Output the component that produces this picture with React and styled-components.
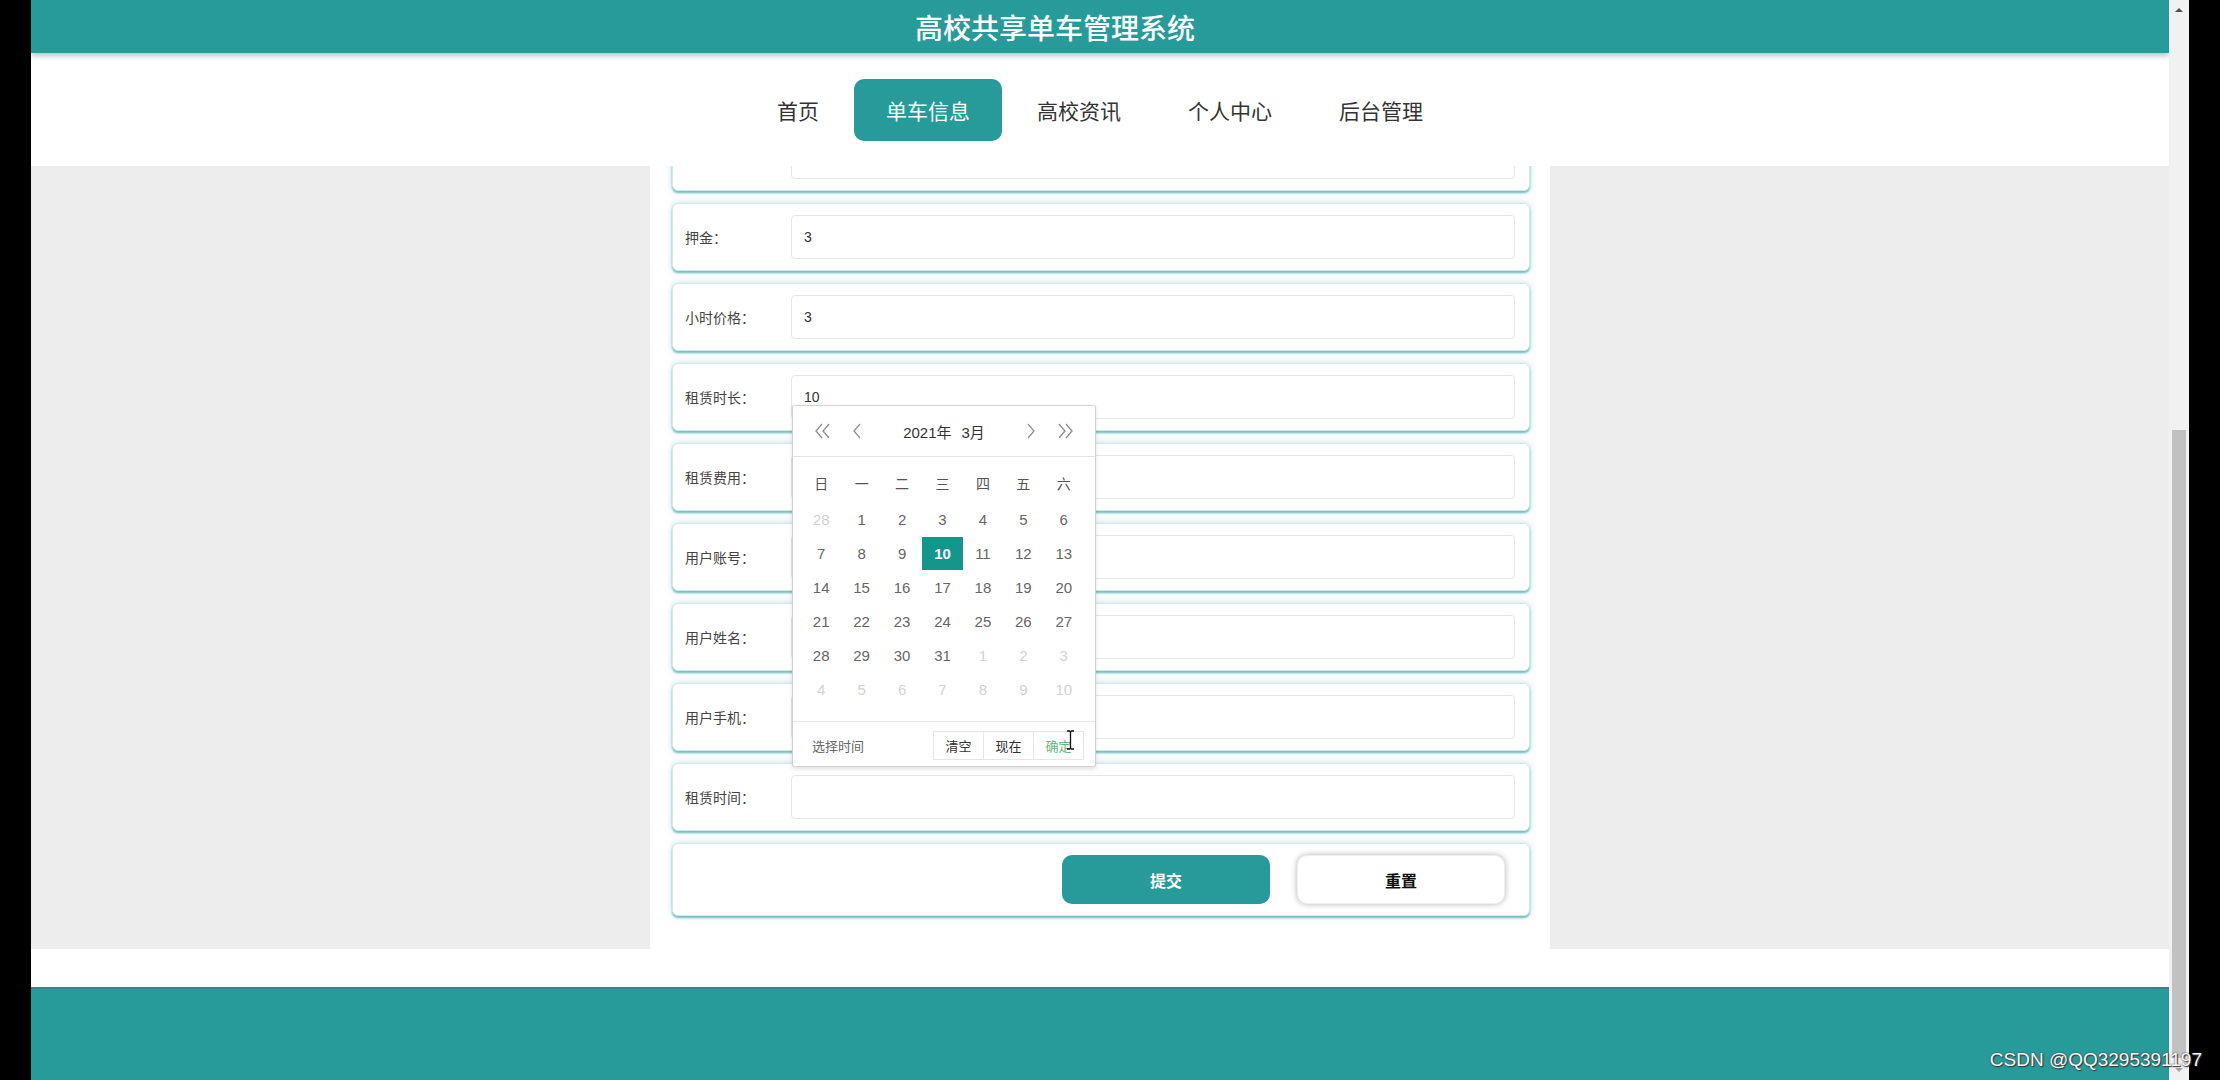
import React from "react";
import styled, { createGlobalStyle } from "styled-components";

const TEAL = "#279b9a";

const GlobalStyle = createGlobalStyle`
  html, body {
    margin: 0;
    padding: 0;
    background: #000;
  }
  body {
    font-family: "Noto Sans CJK SC", "Microsoft YaHei", sans-serif;
    overflow: hidden;
  }
  * {
    box-sizing: border-box;
  }
`;

const Screen = styled.div`
  position: relative;
  display: flex;
  width: 2220px;
  height: 1080px;
  background: #000;
`;

const SideBlack = styled.div`
  width: 31px;
  flex: none;
  background: #000;
`;

const Viewport = styled.div`
  width: 2138px;
  flex: none;
  display: flex;
  flex-direction: column;
  background: #fff;
  overflow: hidden;
`;

const Header = styled.header`
  position: relative;
  z-index: 2;
  height: 53px;
  flex: none;
  display: flex;
  align-items: center;
  justify-content: center;
  padding-right: 90px;
  background: ${TEAL};
  color: #fff;
  font-size: 28px;
  font-weight: 500;
  box-shadow: 0 3px 5px rgba(60, 90, 110, 0.35);
`;

const Nav = styled.nav`
  height: 113px;
  flex: none;
  display: flex;
  align-items: center;
  justify-content: center;
  gap: 3px;
  background: #fff;
`;

const NavItem = styled.a`
  height: 62px;
  padding: 0 32px;
  display: flex;
  align-items: center;
  border-radius: 10px;
  font-size: 21px;
  text-decoration: none;
  color: ${(p) => (p.$active ? "#fff" : "#333")};
  background: ${(p) => (p.$active ? TEAL : "transparent")};
`;

const Main = styled.main`
  height: 783px;
  flex: none;
  display: flex;
  justify-content: center;
  background: #ededed;
  overflow: hidden;
`;

const Panel = styled.div`
  width: 900px;
  background: #fff;
  padding: 0 20px 0 22px;
`;

// page is scrolled: the first row sits partly under the nav
const FormList = styled.div`
  margin-top: -43px;
  display: flex;
  flex-direction: column;
  gap: 12px;
`;

const Card = styled.div`
  height: ${(p) => (p.$tall ? 73 : 68)}px;
  display: flex;
  align-items: center;
  justify-content: ${(p) => (p.$end ? "flex-end" : "flex-start")};
  gap: ${(p) => (p.$end ? "27px" : "0")};
  padding: ${(p) => (p.$end ? "0 24px 0 12px" : "0 14px 0 12px")};
  background: #fff;
  border: 1px solid #d3e8e8;
  border-radius: 6px;
  box-shadow: 0 2px 2px rgba(39, 155, 154, 0.6), 0 0 7px rgba(39, 155, 154, 0.3);
`;

const Label = styled.label`
  width: 106px;
  flex: none;
  font-size: 14px;
  color: #444;
`;

const Field = styled.div`
  position: relative;
  flex: 1;
`;

const InputBox = styled.div`
  height: 44px;
  display: flex;
  align-items: center;
  padding: 0 12px;
  border: 1px solid #e6e6e6;
  border-radius: 4px;
  background: #fff;
  font-family: "Liberation Sans", "Noto Sans CJK SC", sans-serif;
  font-size: 14px;
  color: #333;
`;

const Button = styled.button`
  width: 208px;
  height: 49px;
  border-radius: 10px;
  font-family: "Noto Sans CJK SC", sans-serif;
  font-size: 16px;
  font-weight: 600;
  cursor: pointer;
  border: ${(p) => (p.$primary ? "none" : "1px solid #eee")};
  background: ${(p) => (p.$primary ? TEAL : "#fff")};
  color: ${(p) => (p.$primary ? "#fff" : "#111")};
  box-shadow: ${(p) => (p.$primary ? "none" : "0 0 6px rgba(0, 0, 0, 0.3)")};
`;

const WhiteBand = styled.div`
  height: 38px;
  flex: none;
  background: #fff;
`;

const Footer = styled.footer`
  flex: 1;
  background: ${TEAL};
  border-top: 2px solid #2f8786;
`;

const Scrollbar = styled.div`
  width: 20px;
  flex: none;
  display: flex;
  flex-direction: column;
  background: #f1f1f1;
`;

const ScrollArrow = styled.div`
  height: 20px;
  flex: none;
  display: flex;
  align-items: center;
  justify-content: center;

  &::after {
    content: "";
    border-left: 4px solid transparent;
    border-right: 4px solid transparent;
    ${(p) =>
      p.$down ? "border-top: 4px solid #a3a3a3;" : "border-bottom: 4px solid #505050;"}
  }
`;

const ScrollTrack = styled.div`
  flex: 1;
  display: flex;
  padding: 410px 3px 2px 3px;
`;

const Thumb = styled.div`
  flex: 1;
  background: #c1c1c1;
`;

const Watermark = styled.div`
  position: absolute;
  right: 18px;
  bottom: 9px;
  font-family: "Liberation Sans", sans-serif;
  font-size: 19px;
  color: #f4f4f4;
  text-shadow: 0 0 2px #444, 1px 1px 1px #333;
`;

/* date picker */
const Picker = styled.div`
  position: absolute;
  top: 30px;
  left: 1px;
  z-index: 10;
  width: 304px;
  height: 362px;
  display: flex;
  flex-direction: column;
  background: #fff;
  border: 1px solid #d2d2d2;
  border-radius: 2px;
  box-shadow: 0 2px 4px rgba(0, 0, 0, 0.12);
  font-family: "Liberation Sans", "Noto Sans CJK SC", sans-serif;
`;

const PickerHead = styled.div`
  height: 51px;
  flex: none;
  display: grid;
  grid-template-columns: 34px 34px 1fr 34px 34px;
  align-items: center;
  padding: 0 13px;
  border-bottom: 1px solid #e6e6e6;
`;

const HeadArrow = styled.span`
  display: flex;
  align-items: center;
  justify-content: center;
  cursor: pointer;
`;

const HeadTitle = styled.div`
  display: flex;
  justify-content: center;
  gap: 10px;
  font-size: 15px;
  color: #333;
`;

const DayGrid = styled.div`
  display: grid;
  grid-template-columns: repeat(7, 1fr);
  grid-auto-rows: 33px;
  row-gap: 1px;
  padding: 12px 11px 15px 8px;
`;

const WeekCell = styled.div`
  height: 28px;
  display: flex;
  align-items: center;
  justify-content: center;
  font-size: 14px;
  color: #555;
`;

const DayCell = styled.div`
  display: flex;
  align-items: center;
  justify-content: center;
  font-size: 15px;
  color: ${(p) => (p.$selected ? "#fff" : p.$muted ? "#d2d2d2" : "#666")};
  background: ${(p) => (p.$selected ? "#13978a" : "transparent")};
  font-weight: ${(p) => (p.$selected ? 700 : 400)};
`;

const PickerFoot = styled.div`
  flex: 1;
  display: flex;
  align-items: center;
  justify-content: space-between;
  padding: 2px 11px 0 19px;
  border-top: 1px solid #e6e6e6;
  font-family: "Noto Sans CJK SC", sans-serif;
`;

const FootText = styled.span`
  font-size: 13px;
  color: #666;
`;

const FootBtns = styled.div`
  display: flex;
`;

const FootBtn = styled.span`
  position: relative;
  width: 51px;
  height: 29px;
  display: flex;
  align-items: center;
  justify-content: center;
  border: 1px solid #e6e6e6;
  font-size: 13px;
  color: ${(p) => (p.$confirm ? "#5fb878" : "#333")};
  & + & {
    margin-left: -1px;
  }
`;

const Cursor = styled.svg`
  position: absolute;
  left: 32px;
  top: -2px;
`;

const Chevron = ({ dir = "left", double }) => {
  const flip = dir === "right";
  const w = double ? 18 : 10;
  return (
    <svg
      width={w}
      height="16"
      viewBox={`0 0 ${w} 16`}
      style={{ transform: flip ? "scaleX(-1)" : "none" }}
    >
      <polyline points="8,1 2,8 8,15" fill="none" stroke="#8f8f8f" strokeWidth="1.3" />
      {double && (
        <polyline points="15,1 9,8 15,15" fill="none" stroke="#8f8f8f" strokeWidth="1.3" />
      )}
    </svg>
  );
};

const weekDays = ["日", "一", "二", "三", "四", "五", "六"];

const buildDays = () => {
  const days = [{ d: 28, muted: true }];
  for (let i = 1; i <= 31; i++) days.push({ d: i, selected: i === 10 });
  for (let i = 1; i <= 10; i++) days.push({ d: i, muted: true });
  return days;
};

const DatePicker = () => (
  <Picker>
    <PickerHead>
      <HeadArrow>
        <Chevron double />
      </HeadArrow>
      <HeadArrow>
        <Chevron />
      </HeadArrow>
      <HeadTitle>
        <span>2021年</span>
        <span>3月</span>
      </HeadTitle>
      <HeadArrow>
        <Chevron dir="right" />
      </HeadArrow>
      <HeadArrow>
        <Chevron dir="right" double />
      </HeadArrow>
    </PickerHead>
    <DayGrid>
      {weekDays.map((w) => (
        <WeekCell key={w}>{w}</WeekCell>
      ))}
      {buildDays().map((day, i) => (
        <DayCell key={i} $muted={day.muted} $selected={day.selected}>
          {day.d}
        </DayCell>
      ))}
    </DayGrid>
    <PickerFoot>
      <FootText>选择时间</FootText>
      <FootBtns>
        <FootBtn>清空</FootBtn>
        <FootBtn>现在</FootBtn>
        <FootBtn $confirm>
          确定
          <Cursor width="9" height="20" viewBox="0 0 9 20">
            <path
              d="M1 1h2.5l1 1 1-1H8M4.5 2v16M1 19h2.5l1-1 1 1H8"
              fill="none"
              stroke="#111"
              strokeWidth="1.3"
            />
          </Cursor>
        </FootBtn>
      </FootBtns>
    </PickerFoot>
  </Picker>
);

// first row is scrolled under the nav, its label is out of view
const rows = [
  { id: "top", label: "", value: "" },
  { id: "deposit", label: "押金：", value: "3" },
  { id: "price", label: "小时价格：", value: "3" },
  { id: "hours", label: "租赁时长：", value: "10", picker: true },
  { id: "fee", label: "租赁费用：", value: "" },
  { id: "account", label: "用户账号：", value: "" },
  { id: "name", label: "用户姓名：", value: "" },
  { id: "phone", label: "用户手机：", value: "" },
  { id: "time", label: "租赁时间：", value: "" },
];

const navItems = ["首页", "单车信息", "高校资讯", "个人中心", "后台管理"];

const App = () => (
  <>
    <GlobalStyle />
    <Screen>
      <SideBlack />
      <Viewport>
        <Header>高校共享单车管理系统</Header>
        <Nav>
          {navItems.map((n) => (
            <NavItem key={n} $active={n === "单车信息"}>
              {n}
            </NavItem>
          ))}
        </Nav>
        <Main>
          <Panel>
            <FormList>
              {rows.map((r) => (
                <Card key={r.id}>
                  <Label>{r.label}</Label>
                  <Field>
                    <InputBox>{r.value}</InputBox>
                    {r.picker && <DatePicker />}
                  </Field>
                </Card>
              ))}
              <Card $tall $end>
                <Button $primary>提交</Button>
                <Button>重置</Button>
              </Card>
            </FormList>
          </Panel>
        </Main>
        <WhiteBand />
        <Footer />
      </Viewport>
      <Scrollbar>
        <ScrollArrow />
        <ScrollTrack>
          <Thumb />
        </ScrollTrack>
        <ScrollArrow $down />
      </Scrollbar>
      <SideBlack />
      <Watermark>CSDN @QQ3295391197</Watermark>
    </Screen>
  </>
);

export default App;
